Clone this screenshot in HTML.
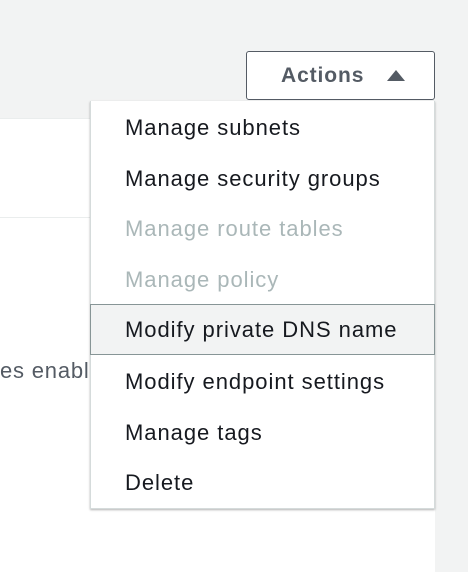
<!DOCTYPE html>
<html><head><style>
html,body{margin:0;padding:0;width:468px;height:572px;overflow:hidden;background:#f2f3f3;font-family:"Liberation Sans",sans-serif;position:relative}
.panel{position:absolute;left:0;top:118px;width:435px;height:454px;background:#fff;border-top:1px solid #eaeded}
.div{position:absolute;left:0;top:217px;width:435px;height:1px;background:#eaeded}
.side{position:absolute;left:0;top:358px;font-size:22px;color:#545b64;letter-spacing:.8px}
.btn{position:absolute;left:246px;top:51px;width:187px;height:47px;background:#fff;border:1px solid #545b64;border-radius:3px;font-weight:bold;font-size:21px;color:#545b64;box-sizing:content-box;letter-spacing:.9px}
.btn span{position:absolute;left:34px;top:12px}
.btn i{position:absolute;left:140px;top:18px;width:0;height:0;border-left:9px solid transparent;border-right:9px solid transparent;border-bottom:11px solid #545b64}
.menu{position:absolute;left:90px;top:101px;width:345px;height:408px;background:#fff;border:1px solid #d5dbdb;border-top:none;box-sizing:border-box;box-shadow:0 1px 2px rgba(0,0,0,.3)}
.it{position:absolute;left:0;width:343px;height:51px;box-sizing:border-box;padding-left:34px;line-height:51px;font-size:22px;color:#16191f;letter-spacing:.95px;white-space:nowrap}
.dis{color:#aab7b8}
.hl{background:#f2f3f3;border:1px solid #879596;left:-1px;width:345px;padding-left:34px;line-height:49px}
</style></head><body>
<div class="panel"></div>
<div class="div"></div>
<div class="side">es enabl</div>
<div class="btn"><span>Actions</span><i></i></div>
<div class="menu">
<div class="it" style="top:1px">Manage subnets</div>
<div class="it" style="top:52px">Manage security groups</div>
<div class="it dis" style="top:102px">Manage route tables</div>
<div class="it dis" style="top:153px">Manage policy</div>
<div class="it hl" style="top:203px">Modify private DNS name</div>
<div class="it" style="top:255px">Modify endpoint settings</div>
<div class="it" style="top:306px">Manage tags</div>
<div class="it" style="top:356px">Delete</div>
</div>
</body></html>
